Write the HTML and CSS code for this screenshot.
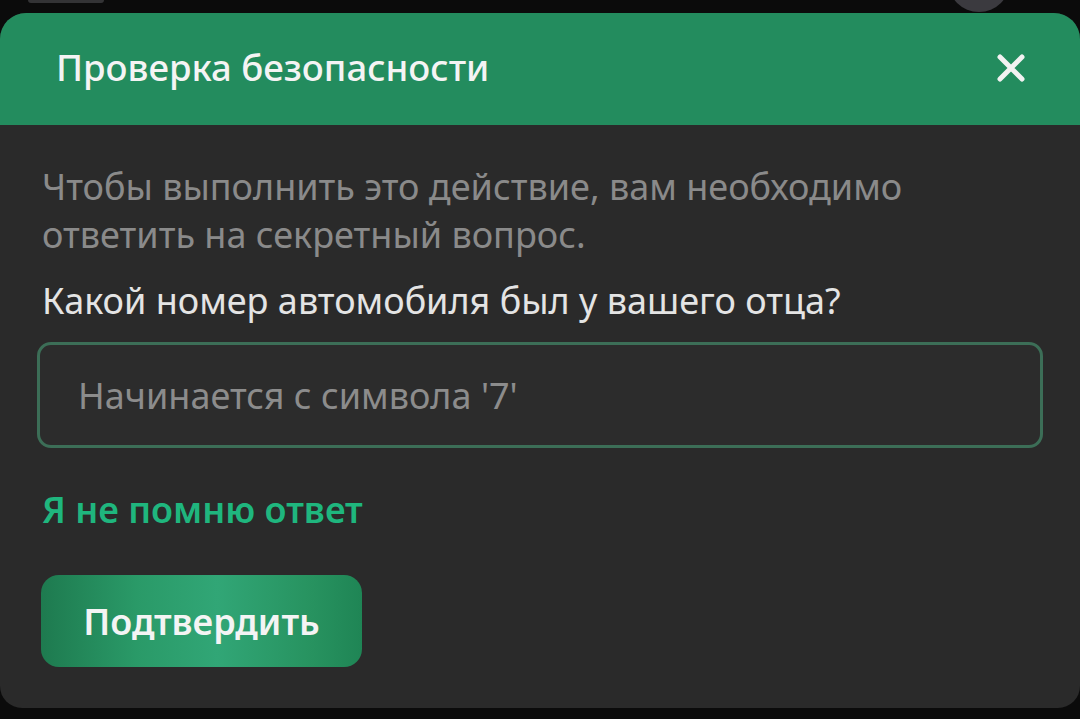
FILE: index.html
```html
<!DOCTYPE html>
<html lang="ru">
<head>
    <meta charset="UTF-8">
    <meta name="viewport" content="width=device-width, initial-scale=1.0">
    <title>Проверка безопасности</title>
    <link rel="stylesheet" href="styles.css">
</head>
<body>

    <!-- Strip of the page behind the sheet -->
    <div class="backdrop">
        <div class="backdrop-tab"></div>
        <div class="backdrop-avatar"></div>
    </div>

    <!-- Security check sheet -->
    <div class="sheet">
        <div class="sheet-header">
            <h1>Проверка безопасности</h1>
            <button class="close-btn" aria-label="Закрыть">
                <svg width="30" height="30" viewBox="0 0 30 30">
                    <path d="M4 4 L26 26 M26 4 L4 26" stroke="#f2f2f2" stroke-width="5" stroke-linecap="round"/>
                </svg>
            </button>
        </div>

        <div class="sheet-body">
            <p class="hint">Чтобы выполнить это действие, вам необходимо ответить на секретный вопрос.</p>
            <p class="question">Какой номер автомобиля был у вашего отца?</p>
            <input type="text" class="answer" placeholder="Начинается с символа '7'">
            <a href="#" class="forgot">Я не помню ответ</a>
            <button class="confirm-btn">Подтвердить</button>
        </div>
    </div>

</body>
</html>
```

FILE: styles.css
```css
body {
    margin: 0;
    padding: 0;
    font-family: "Noto Sans", "Open Sans", sans-serif;
    background-color: #0b0b0b;
    color: #e4e4e4;
    overflow: hidden;
    height: 719px;
}

/* Page behind the sheet */
.backdrop {
    height: 13px;
    display: flex;
    justify-content: space-between;
    padding: 0 70px 0 28px;
}

.backdrop-tab {
    width: 76px;
    height: 3px;
    background-color: #333335;
    border-radius: 0 0 3px 3px;
}

.backdrop-avatar {
    width: 62px;
    height: 62px;
    margin-top: -50px;
    border-radius: 50%;
    background-color: #3b3a3f;
}

/* Sheet */
.sheet {
    height: 695px;
    background-color: #2a2a2a;
    border-radius: 26px 26px 22px 22px;
    overflow: hidden;
}

.sheet-header {
    height: 112px;
    background-color: #238c5e;
    display: flex;
    align-items: center;
    justify-content: space-between;
    padding: 0 54px 0 56px;
}

.sheet-header h1 {
    margin: -4px 0 0 0;
    font-size: 36.5px;
    font-weight: 500;
    color: #f4f4f4;
}

.close-btn {
    background: none;
    border: none;
    padding: 0;
    margin-top: -2px;
    cursor: pointer;
    display: flex;
}

.sheet-body {
    padding: 38px 37px 0 37px;
    display: flex;
    flex-direction: column;
    align-items: flex-start;
}

.hint {
    margin: 0 0 0 5px;
    font-size: 36px;
    line-height: 48px;
    color: #8a8a8a;
    max-width: 920px;
}

.question {
    margin: 18px 0 0 5px;
    font-size: 36px;
    line-height: 48px;
    color: #e4e4e4;
}

.answer {
    box-sizing: border-box;
    width: 1006px;
    height: 106px;
    margin-top: 17px;
    padding: 0 38px;
    font-family: inherit;
    font-size: 36px;
    color: #e4e4e4;
    background-color: #2c2c2c;
    border: 3px solid #3c6e57;
    border-radius: 14px;
    outline: none;
}

.answer::placeholder {
    color: #8c8c8c;
}

.forgot {
    margin: 38px 0 0 5px;
    font-size: 36px;
    line-height: 48px;
    font-weight: 600;
    color: #1fb67e;
    text-decoration: none;
}

.confirm-btn {
    margin: 41px 0 0 4px;
    width: 321px;
    height: 92px;
    font-family: inherit;
    font-size: 36px;
    font-weight: 600;
    color: #f4f4f4;
    border: none;
    border-radius: 18px;
    cursor: pointer;
    background: linear-gradient(90deg, #1e7a4f 0%, #2a9a68 30%, #31a676 55%, #27925f 85%, #1f8555 100%);
}
```
